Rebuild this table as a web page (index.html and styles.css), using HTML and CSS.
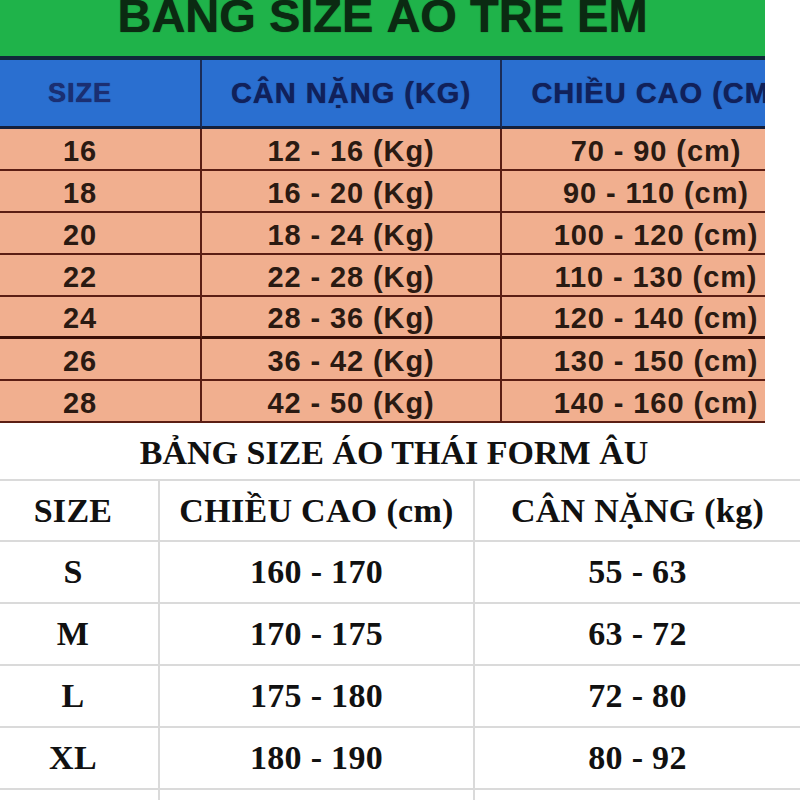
FILE: index.html
```html
<!DOCTYPE html>
<html lang="vi">
<head>
<meta charset="utf-8">
<title>Bảng size</title>
<link rel="stylesheet" href="styles.css">
</head>
<body>
<div class="page">
  <section class="kids">
    <div class="kids-title"><h1>BẢNG SIZE ÁO TRẺ EM</h1></div>
    <div class="kids-grid">
      <div class="kh c0 size-head">SIZE</div>
      <div class="kh c1">CÂN NẶNG (KG)</div>
      <div class="kh c2">CHIỀU CAO (CM)</div>

      <div class="kc c0">16</div><div class="kc c1">12 - 16 (Kg)</div><div class="kc c2">70 - 90 (cm)</div>
      <div class="kc c0">18</div><div class="kc c1">16 - 20 (Kg)</div><div class="kc c2">90 - 110 (cm)</div>
      <div class="kc c0">20</div><div class="kc c1">18 - 24 (Kg)</div><div class="kc c2">100 - 120 (cm)</div>
      <div class="kc c0">22</div><div class="kc c1">22 - 28 (Kg)</div><div class="kc c2">110 - 130 (cm)</div>
      <div class="kc c0 thick">24</div><div class="kc c1 thick">28 - 36 (Kg)</div><div class="kc c2 thick">120 - 140 (cm)</div>
      <div class="kc c0">26</div><div class="kc c1">36 - 42 (Kg)</div><div class="kc c2">130 - 150 (cm)</div>
      <div class="kc c0">28</div><div class="kc c1">42 - 50 (Kg)</div><div class="kc c2">140 - 160 (cm)</div>
    </div>
  </section>

  <h2 class="thai-title">BẢNG SIZE ÁO THÁI FORM ÂU</h2>
  <div class="thai-grid">
    <div class="th t0">SIZE</div>
    <div class="th t1">CHIỀU CAO (cm)</div>
    <div class="th t2">CÂN NẶNG (kg)</div>

    <div class="td t0">S</div><div class="td t1">160 - 170</div><div class="td t2">55 - 63</div>
    <div class="td t0">M</div><div class="td t1">170 - 175</div><div class="td t2">63 - 72</div>
    <div class="td t0">L</div><div class="td t1">175 - 180</div><div class="td t2">72 - 80</div>
    <div class="td t0">XL</div><div class="td t1">180 - 190</div><div class="td t2">80 - 92</div>
    <div class="td t0"></div><div class="td t1"></div><div class="td t2"></div>
  </div>
</div>
</body>
</html>
```

FILE: styles.css
```css
* { box-sizing: border-box; }
html, body {
  margin: 0;
  padding: 0;
  background: #ffffff;
}
.page {
  width: 800px;
  height: 800px;
  overflow: hidden;
}

/* ---------- kids table ---------- */
.kids {
  width: 765px;
  overflow: hidden;
}
.kids-title {
  height: 60px;
  background: #1fb34a;
  border-bottom: 4px solid #10283a;
}
.kids-title h1 {
  margin: 0;
  font-family: "Liberation Sans", Arial, sans-serif;
  font-weight: 700;
  font-size: 47px;
  line-height: 32px;
  text-align: center;
  color: #0b2a12;
  white-space: nowrap;
  text-shadow: 0 0 1px #0b2a12;
}
.kids-grid {
  width: 810px;
  display: grid;
  grid-template-columns: 202px 300px 308px;
  font-family: "Liberation Sans", Arial, sans-serif;
  font-weight: 700;
}
.kh {
  height: 69px;
  background: #2a6fd0;
  border-bottom: 3px solid #14203c;
  color: #11215a;
  font-size: 29px;
  letter-spacing: 1px;
  display: flex;
  align-items: center;
  justify-content: center;
  white-space: nowrap;
  text-shadow: 0 0 1px #11215a;
}
.kh.c0, .kh.c1 { border-right: 2px solid #1a2c58; }
.size-head {
  padding-right: 40px;
  font-size: 27px;
  color: #1b2f72;
}
.kc {
  height: 42px;
  padding-top: 4px;
  background: #f1af8f;
  border-bottom: 2px solid #5b1e14;
  color: #2a1a12;
  font-size: 29px;
  letter-spacing: 0.9px;
  display: flex;
  align-items: center;
  justify-content: center;
  white-space: nowrap;
}
.kc.c0, .kc.c1 { border-right: 2px solid #5b1e14; }
.kc.c0 { padding-right: 40px; }
.kc.thick { border-bottom-width: 3px; border-bottom-color: #3a1008; }

/* ---------- thai table ---------- */
.thai-title {
  margin: 11px 0 8px;
  padding-right: 12px;
  font-family: "Liberation Serif", "Times New Roman", serif;
  font-weight: 700;
  font-size: 34px;
  line-height: 37px;
  text-align: center;
  color: #111111;
}
.thai-grid {
  display: grid;
  grid-template-columns: 160px 315px 325px;
  border-top: 2px solid #dadada;
  font-family: "Liberation Serif", "Times New Roman", serif;
  font-weight: 700;
  font-size: 34px;
  color: #111111;
}
.th, .td {
  border-bottom: 2px solid #dadada;
  display: flex;
  align-items: center;
  justify-content: center;
  white-space: nowrap;
  letter-spacing: 0.3px;
}
.th { height: 61px; }
.td { height: 62px; }
.t0, .t1 { border-right: 2px solid #dadada; }
.t0 { padding-right: 12px; }
```
